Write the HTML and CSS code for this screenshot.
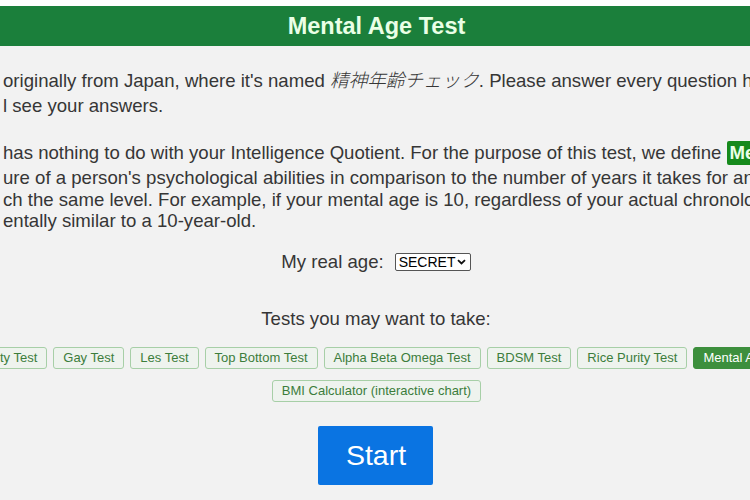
FILE: index.html
```html
<!DOCTYPE html>
<html lang="en">
<head>
<meta charset="utf-8">
<title>Mental Age Test</title>
<link rel="stylesheet" href="styles.css">
</head>
<body>
<div class="topstrip"></div>
<header class="header"><h1 class="title">Mental Age Test</h1></header>
<main class="page">
  <p class="intro">originally from Japan, where it's named <i class="ja" lang="ja">精神年齢チェック</i>. Please answer every question honestly, no one<br>l see your answers.</p>
  <p class="desc">has nothing to do with your Intelligence Quotient. For the purpose of this test, we define <b class="badge">Mental Age</b> as a<br>ure of a person's psychological abilities in comparison to the number of years it takes for an average child<br>ch the same level. For example, if your mental age is 10, regardless of your actual chronological age, you are<br>entally similar to a 10-year-old.</p>
  <div class="age-row">
    <label class="age-label" for="age">My real age:</label>
    <span class="select-wrap">
      <select id="age" class="age-select"><option>SECRET</option></select>
      <svg class="chevron" width="9" height="6" viewBox="0 0 9 6" aria-hidden="true"><path d="M1 1.2 L4.5 4.5 L8 1.2" fill="none" stroke="#111" stroke-width="1.8"/></svg>
    </span>
  </div>
  <p class="tests-title">Tests you may want to take:</p>
  <nav class="tests">
    <a class="test">Sexuality Test</a>
    <a class="test">Gay Test</a>
    <a class="test">Les Test</a>
    <a class="test">Top Bottom Test</a>
    <a class="test">Alpha Beta Omega Test</a>
    <a class="test">BDSM Test</a>
    <a class="test">Rice Purity Test</a>
    <a class="test active">Mental Age Test</a>
    <a class="test">BMI Calculator (interactive chart)</a>
  </nav>
  <button class="start">Start</button>
</main>
</body>
</html>
```
FILE: styles.css
```css
html, body {
  margin: 0;
  padding: 0;
}
body {
  background: #f2f2f2;
  font-family: "Liberation Sans", Arial, "Noto Sans CJK JP", sans-serif;
  color: #363636;
  overflow: hidden;
  width: 750px;
  height: 500px;
}
.topstrip {
  height: 6px;
  background: #fff;
}
.header {
  height: 40px;
  background: #1b7f3b;
  display: flex;
  align-items: center;
  justify-content: center;
}
.title {
  margin: 0;
  font-size: 23.5px;
  font-weight: bold;
  color: #eaffe6;
  line-height: 40px;
  padding-left: 3px;
}
.page {
  display: flex;
  flex-direction: column;
  align-items: stretch;
}
.intro, .desc {
  margin: 0;
  padding-left: 3px;
  font-size: 18.6px;
  white-space: nowrap;
}
.intro {
  margin-top: 20px;
  line-height: 25px;
}
.ja {
  font-family: "Noto Sans CJK JP", sans-serif;
  font-style: italic;
  font-weight: 300;
}
.desc {
  margin-top: 23px;
  line-height: 21.5px;
}
.badge {
  display: inline-block;
  background: #168a1c;
  color: #eaffe6;
  padding: 1px 3px 2px;
  line-height: 21px;
  border-radius: 2px;
  margin-bottom: 2px;
}
.age-row {
  margin-top: 18px;
  display: flex;
  align-items: center;
  justify-content: center;
  gap: 11px;
  height: 24px;
  padding-left: 2px;
}
.age-label {
  font-size: 18.6px;
}
.select-wrap {
  position: relative;
  display: flex;
}
.age-select {
  appearance: none;
  -webkit-appearance: none;
  font-family: "Liberation Sans", Arial, sans-serif;
  font-size: 14px;
  height: 18px;
  width: 76px;
  padding: 0 0 0 3px;
  border: 1px solid #555;
  border-radius: 2px;
  background: #fff;
  color: #000;
}
.chevron {
  position: absolute;
  right: 5px;
  top: 6px;
  pointer-events: none;
}
.tests-title {
  margin: 34px 0 0;
  font-size: 18.6px;
  line-height: 22px;
  text-align: center;
  padding-left: 2px;
}
.tests {
  margin-top: 17px;
  align-self: center;
  width: 870px;
  padding-left: 3px;
  display: flex;
  flex-wrap: wrap;
  justify-content: center;
  gap: 11px 6px;
}
.test {
  display: block;
  font-size: 13px;
  line-height: 20px;
  padding: 0 9px;
  color: #3c7d3c;
  background: #eef3ee;
  border: 1px solid #a7cfa7;
  border-radius: 3px;
  white-space: nowrap;
}
.test.active {
  background: #3d8f3d;
  border-color: #3d8f3d;
  color: #fff;
}
.start {
  align-self: center;
  margin-top: 24px;
  width: 115px;
  height: 59px;
  border: none;
  border-radius: 2px;
  background: #0a74e2;
  color: #fff;
  font-family: "Liberation Sans", Arial, sans-serif;
  font-size: 28.5px;
  padding: 0 0 0 2px;
}
```
